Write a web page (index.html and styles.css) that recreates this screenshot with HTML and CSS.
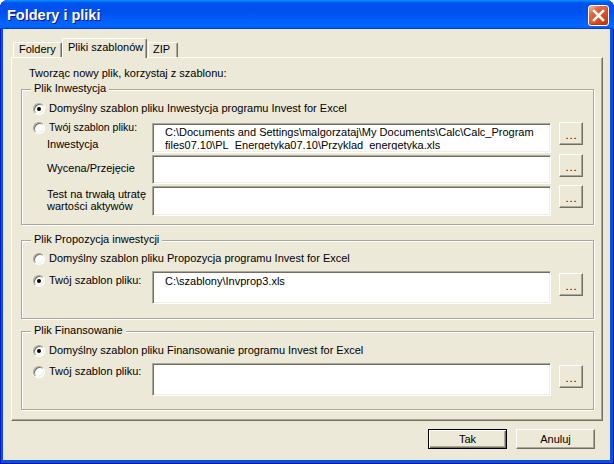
FILE: index.html
```html
<!DOCTYPE html>
<html lang="pl">
<head>
<meta charset="utf-8">
<title>Foldery i pliki</title>
<link rel="stylesheet" href="styles.css">
</head>
<body>
<div class="window">
  <div class="titlebar">
    <span class="title">Foldery i pliki</span>
    <span class="close"><svg width="19" height="19" viewBox="0 0 19 19"><path d="M5 5 L14 14 M14 5 L5 14" stroke="#fff" stroke-width="2.6" stroke-linecap="square"/></svg></span>
  </div>
  <div class="client">
    <div class="tabs">
      <div class="tab t1">Foldery</div>
      <div class="tab sel">Pliki szablonów</div>
      <div class="tab t3">ZIP</div>
    </div>
    <div class="panel">
      <div class="intro">Tworząc nowy plik, korzystaj z szablonu:</div>

      <div class="group g1">
        <div class="legend">Plik Inwestycja</div>
        <div class="opt"><span class="radio on"></span>Domyślny szablon pliku Inwestycja programu Invest for Excel</div>
        <div class="frow r1">
          <div class="lbl">
            <div class="opt small"><span class="radio"></span>Twój szablon pliku:</div>
            <div class="sub">Inwestycja</div>
          </div>
          <div class="field"><div class="ftext">C:\Documents and Settings\malgorzataj\My Documents\Calc\Calc_Program files07.10\PL_Energetyka07.10\Przyklad_energetyka.xls</div></div>
          <div class="dots">...</div>
        </div>
        <div class="frow r2">
          <div class="lbl"><div class="sub">Wycena/Przejęcie</div></div>
          <div class="field"></div>
          <div class="dots">...</div>
        </div>
        <div class="frow r3">
          <div class="lbl"><div class="sub two">Test na trwałą utratę<br>wartości aktywów</div></div>
          <div class="field"></div>
          <div class="dots">...</div>
        </div>
      </div>

      <div class="group g2">
        <div class="legend">Plik Propozycja inwestycji</div>
        <div class="opt"><span class="radio"></span>Domyślny szablon pliku Propozycja programu Invest for Excel</div>
        <div class="frow rs">
          <div class="lbl"><div class="opt"><span class="radio on"></span>Twój szablon pliku:</div></div>
          <div class="field tall"><div class="ftext">C:\szablony\Invprop3.xls</div></div>
          <div class="dots">...</div>
        </div>
      </div>

      <div class="group g3">
        <div class="legend">Plik Finansowanie</div>
        <div class="opt"><span class="radio on"></span>Domyślny szablon pliku Finansowanie programu Invest for Excel</div>
        <div class="frow rs">
          <div class="lbl"><div class="opt"><span class="radio"></span>Twój szablon pliku:</div></div>
          <div class="field tall"></div>
          <div class="dots">...</div>
        </div>
      </div>
    </div>
    <div class="actions">
      <div class="pbtn def">Tak</div>
      <div class="pbtn">Anuluj</div>
    </div>
  </div>
</div>
</body>
</html>
```
FILE: styles.css
```css
* { box-sizing: border-box; }
html, body { margin: 0; padding: 0; }
body {
  font-family: "Liberation Sans", Arial, sans-serif;
  font-size: 11px;
  color: #000;
  background: #fff;
}
.window {
  width: 614px;
  height: 464px;
  display: flex;
  flex-direction: column;
  background: #0A50E0;
  border-radius: 8px 8px 0 0;
  overflow: hidden;
  box-shadow: inset 1px 0 #0019CF, inset -1px 0 #00138C, inset 0 -1px #00138C;
}
.titlebar {
  height: 29px;
  flex: none;
  display: flex;
  justify-content: space-between;
  align-items: flex-start;
  padding: 0 5px 0 7px;
  background: linear-gradient(180deg, #0997FF 0%, #0053EE 10%, #0050EE 40%, #0066FF 86%, #0066FF 92%, #005BFF 95%, #003DD7 97%, #003DD7 100%);
  border-radius: 7px 7px 0 0;
}
.title {
  color: #fff;
  font-weight: bold;
  font-size: 14.5px;
  line-height: 16px;
  padding-top: 7px;
  text-shadow: 1px 1px #0F1089;
}
.close {
  margin-top: 5px;
  width: 21px;
  height: 21px;
  border: 1px solid #fff;
  border-radius: 3px;
  background: radial-gradient(circle at 85% 85%, #C73B0B 0%, #E0542A 50%, #E36A45 70%, #F2B9A4 92%, #fff 100%);
  box-shadow: inset 0 -1px 2px #B83200;
  display: flex;
  align-items: center;
  justify-content: center;
}
.close svg { display: block; }
.client {
  flex: 1;
  margin: 0 4px 4px 3px;
  background: #ECE9D8;
  padding: 9px 7px 0 8px;
}
.tabs {
  height: 19px;
  display: flex;
  align-items: flex-end;
  padding-left: 2px;
  position: relative;
  z-index: 2;
}
.tab {
  height: 15px;
  line-height: 13px;
  border: 1px solid;
  border-bottom: 0;
  border-color: #fff #716F64 transparent #fff;
  border-radius: 2px 2px 0 0;
  box-shadow: inset -1px 0 #ACA899;
  padding: 0 0 0 5px;
  white-space: nowrap;
}
.t1 { width: 49px; }
.t3 { width: 30px; padding-left: 4px; margin-left: 1px; }
.tab.sel {
  width: 85px;
  height: 20px;
  margin-bottom: -1px;
  padding: 2px 0 0 5px;
  background: #ECE9D8;
}
.panel {
  height: 364px;
  border: 1px solid;
  border-color: #fff #716F64 #716F64 #fff;
  box-shadow: inset -1px -1px #ACA899;
  padding: 9px 0 0 9px;
}
.intro {
  line-height: 13px;
  margin-left: 8px;
}
.group {
  position: relative;
  width: 573px;
  border: 1px solid #ACA899;
  box-shadow: inset 1px 1px #fff, 1px 1px #fff;
  padding-left: 11px;
}
.g1 { margin-top: 9px; height: 136px; padding-top: 12px; }
.g2 { margin-top: 15px; height: 79px; padding-top: 11px; }
.g3 { margin-top: 12px; height: 79px; padding-top: 12px; }
.legend {
  position: absolute;
  top: -8px;
  left: 9px;
  padding: 0 3px;
  line-height: 13px;
  background: #ECE9D8;
  white-space: nowrap;
}
.opt {
  display: flex;
  align-items: center;
  height: 13px;
  line-height: 13px;
  white-space: nowrap;
}
.opt.small { font-size: 10.5px; }
.radio {
  flex: none;
  position: relative;
  width: 12px;
  height: 12px;
  margin-right: 4px;
  border-radius: 50%;
  background: #fff;
  border: 1px solid;
  border-color: #ACA899 #fff #fff #ACA899;
  box-shadow: inset 1px 1px 0 #716F64, inset -1px -1px 0 #F1EFE2;
}
.radio.on::after {
  content: "";
  position: absolute;
  left: 3px;
  top: 3px;
  width: 4px;
  height: 4px;
  border-radius: 50%;
  background: #000;
}
.frow {
  display: grid;
  grid-template-columns: 111px 399px 24px;
  column-gap: 8px;
  align-items: start;
}
.r1 { margin-top: 8px; }
.r2, .r3 { margin-top: 2px; }
.rs { margin-top: 6px; }
.lbl { line-height: 13px; }
.sub { padding-left: 14px; white-space: nowrap; }
.r1 .lbl { margin-top: -2px; }
.r1 .sub { margin-top: 4px; }
.r2 .sub { padding-top: 7px; }
.r3 .sub { padding-top: 2px; line-height: 12px; }
.rs .lbl { margin-top: 3px; }
.g3 .rs .lbl { margin-top: 2px; }
.field {
  background: #fff;
  border: 1px solid;
  border-color: #ACA899 #fff #fff #ACA899;
  box-shadow: inset 1px 1px #716F64, inset -1px -1px #F1EFE2;
  padding: 2px 3px 0 12px;
  height: 30px;
}
.r2 .field { height: 29px; }
.field.tall { height: 33px; padding-top: 3px; }
.ftext {
  line-height: 13px;
  height: 24px;
  overflow: hidden;
}
.dots {
  width: 24px;
  height: 23px;
  margin-top: -1px;
  border: 1px solid;
  border-color: #fff #716F64 #716F64 #fff;
  box-shadow: inset -1px -1px #ACA899;
  display: flex;
  justify-content: center;
  align-items: flex-end;
  padding-bottom: 3px;
  line-height: 11px;
  letter-spacing: 1px;
  padding-left: 1px;
}
.rs .dots { margin-top: 2px; }
.actions {
  display: flex;
  justify-content: flex-end;
  gap: 9px;
  margin-top: 8px;
  padding-right: 8px;
}
.pbtn {
  width: 79px;
  height: 20px;
  border: 1px solid;
  border-color: #fff #716F64 #716F64 #fff;
  box-shadow: inset -1px -1px #ACA899;
  display: flex;
  align-items: center;
  justify-content: center;
  line-height: 13px;
}
.pbtn.def {
  border-color: #000;
  box-shadow: inset 1px 1px #fff, inset -1px -1px #716F64, inset -2px -2px #ACA899;
}
```
